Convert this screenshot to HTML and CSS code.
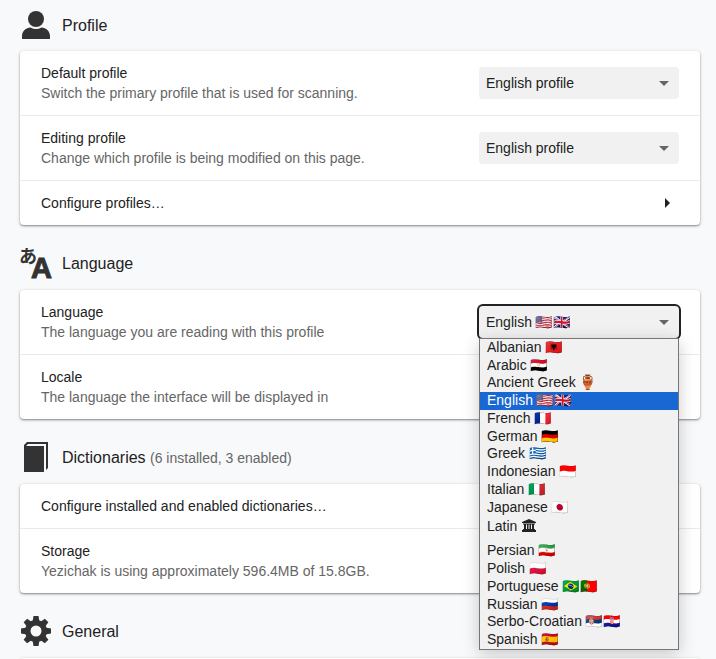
FILE: index.html
```html
<!DOCTYPE html>
<html lang="en">
<head>
<meta charset="utf-8">
<title>Settings</title>
<link rel="stylesheet" href="styles.css">
</head>
<body>
<main class="page">
  <header class="section-head">
    <svg class="icon" viewBox="0 0 30 30" aria-hidden="true"><circle cx="15" cy="9" r="8"/><path d="M1 28.500V26C1 21 5 18 9.500 17.500Q15 20.500 20.500 17.500C25 18 29 21 29 26V28.500Q29 29 28.500 29H1.500Q1 29 1 28.500Z"/></svg>
    <h2>Profile</h2>
  </header>
  <section class="card">
    <div class="row">
      <div class="label"><label for="default-profile">Default profile</label><p>Switch the primary profile that is used for scanning.</p></div>
      <div class="select"><select id="default-profile"><option>English profile</option></select></div>
    </div>
    <div class="row">
      <div class="label"><label for="editing-profile">Editing profile</label><p>Change which profile is being modified on this page.</p></div>
      <div class="select"><select id="editing-profile"><option>English profile</option></select></div>
    </div>
    <button class="row link-row" type="button"><span>Configure profiles…</span><span class="chevron"></span></button>
  </section>

  <header class="section-head">
    <svg class="icon" viewBox="0 0 30 30" aria-hidden="true"><text class="kana" x="-2" y="15">あ</text><text class="latin" x="10" y="30">A</text></svg>
    <h2>Language</h2>
  </header>
  <section class="card">
    <div class="row">
      <div class="label"><label for="language">Language</label><p>The language you are reading with this profile</p></div>
      <div class="select open">
        <select id="language"><option>English 🇺🇸🇬🇧</option></select>
        <ul class="popup" role="listbox" aria-label="Language">
          <li role="option">Albanian 🇦🇱</li>
          <li role="option">Arabic 🇪🇬</li>
          <li role="option">Ancient Greek 🏺</li>
          <li role="option" aria-selected="true">English 🇺🇸🇬🇧</li>
          <li role="option">French 🇫🇷</li>
          <li role="option">German 🇩🇪</li>
          <li role="option">Greek 🇬🇷</li>
          <li role="option">Indonesian 🇮🇩</li>
          <li role="option">Italian 🇮🇹</li>
          <li role="option">Japanese 🇯🇵</li>
          <li role="option" class="tall">Latin <svg class="museum" viewBox="0 0 14 13" aria-hidden="true"><path d="M7 0L14 3V4H0V3ZM1 4.500H13V5.500H1ZM2 5H4V10H2ZM5 5H6.500V10H5ZM7.500 5H9V10H7.500ZM10 5H12V10H10ZM1 10H13V11H14V13H0V11H1Z"/></svg></li>
          <li role="option">Persian 🇮🇷</li>
          <li role="option">Polish 🇵🇱</li>
          <li role="option">Portuguese 🇧🇷🇵🇹</li>
          <li role="option">Russian 🇷🇺</li>
          <li role="option">Serbo-Croatian 🇷🇸🇭🇷</li>
          <li role="option">Spanish 🇪🇸</li>
        </ul>
      </div>
    </div>
    <div class="row">
      <div class="label"><label for="locale">Locale</label><p>The language the interface will be displayed in</p></div>
      <div class="select"><select id="locale"><option>English</option></select></div>
    </div>
  </section>

  <header class="section-head">
    <svg class="icon" viewBox="0 0 30 30" aria-hidden="true"><path d="M3 3L6 0H27V26L25 28V2H7L5 4H23V30H3Z"/></svg>
    <h2>Dictionaries <small>(6 installed, 3 enabled)</small></h2>
  </header>
  <section class="card">
    <button class="row link-row" type="button"><span>Configure installed and enabled dictionaries…</span><span class="chevron"></span></button>
    <div class="row">
      <div class="label"><span>Storage</span><p>Yezichak is using approximately 596.4MB of 15.8GB.</p></div>
    </div>
  </section>

  <header class="section-head">
    <svg class="icon" viewBox="-15 -15 30 30" aria-hidden="true"><path id="tooth" d="M-3.500 -9L-2.500 -15H2.500L3.500 -9V9L2.500 15H-2.500L-3.500 9Z"/><use href="#tooth" transform="rotate(45)"/><use href="#tooth" transform="rotate(90)"/><use href="#tooth" transform="rotate(135)"/><circle r="11"/><circle class="hole" r="5.500"/></svg>
    <h2>General</h2>
  </header>
  <section class="card"><div class="row"></div></section>
</main>
</body>
</html>
```
FILE: styles.css
```css
* { box-sizing: border-box; }
body {
  margin: 0;
  background: #f8f9fb;
  color: #222;
  font: 14px/20px "Liberation Sans", Arial, "Noto Color Emoji", sans-serif;
}
.page {
  height: 100vh;
  overflow: hidden;
  padding: 0 16px 0 20px;
}
.section-head {
  display: flex;
  align-items: center;
  gap: 11px;
  padding: 23px 0 12px 1px;
}
.section-head:first-child { padding-top: 10px; padding-bottom: 11px; }
.icon { width: 30px; height: 30px; fill: #333; overflow: visible; }
.icon .hole { fill: #f8f9fb; }
.icon text { stroke: #333; stroke-width: 1; }
.kana { font: bold 18px "Noto Sans CJK JP", sans-serif; }
.icon .kana { stroke-width: 0; }
.latin { font: bold 29px "Liberation Sans", sans-serif; }
h2 { margin: 0; padding-top: 2px; font-size: 16px; font-weight: 400; line-height: 28px; }
small { font-size: 14px; color: #666; }
.card {
  background: #fff;
  border-radius: 4px;
  box-shadow: 0 1px 2px rgba(0, 0, 0, .4), 0 1px 4px rgba(0, 0, 0, .12);
}
.row {
  display: flex;
  align-items: center;
  justify-content: space-between;
  padding: 12px 21px;
}
.row + .row { border-top: 1px solid #eaeaea; }
.link-row {
  width: 100%;
  border: 0;
  background: none;
  color: inherit;
  font: inherit;
  text-align: left;
}
.label > * { display: block; }
.label p { margin: 0; color: #666; }
.chevron {
  margin-right: 9px;
  border: 5px solid transparent;
  border-left-color: #222;
  border-right: 0;
}
.select { position: relative; width: 200px; }
.select::after {
  content: "";
  position: absolute;
  right: 10px;
  top: 14px;
  border: 5px solid transparent;
  border-top-color: #666;
  border-bottom: 0;
}
select {
  display: block;
  width: 100%;
  height: 32px;
  padding: 0 7px;
  border: 0;
  border-radius: 4px;
  background: #f1f1f1;
  color: #222;
  font: inherit;
  appearance: none;
}
.open select { outline: 2px solid #222; }
.popup {
  position: absolute;
  z-index: 1;
  top: 100%;
  left: 0;
  right: 0;
  display: grid;
  grid-template-rows: repeat(10, minmax(0, 1fr)) 26px repeat(6, minmax(0, 1fr));
  height: 312px;
  margin: 0;
  padding: 0;
  border: 1px solid #767676;
  background: #f1f1f1;
  box-shadow: 0 4px 16px rgba(0, 0, 0, .2);
  list-style: none;
}
.popup li {
  display: flex;
  align-items: center;
  padding: 0 7px 2px;
  line-height: 14px;
  white-space: pre;
}
.popup .tall { padding-bottom: 8px; }
.museum { width: 14px; height: 13px; margin-left: 1px; fill: #222; }
.popup [aria-selected="true"] { background: #1967d2; color: #fff; }
```
